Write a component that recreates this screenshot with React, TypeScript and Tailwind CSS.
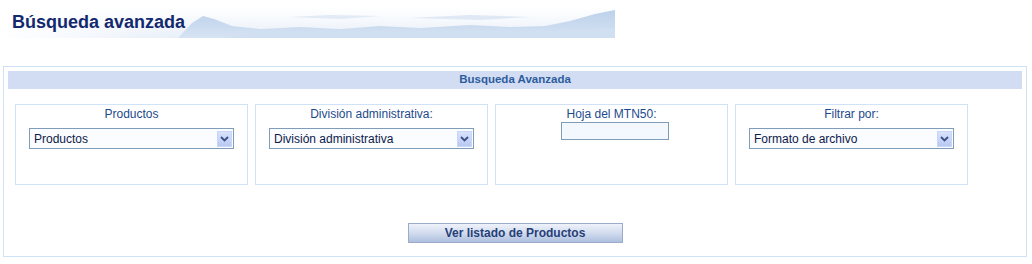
import React from "react";

const font = { fontFamily: '"Liberation Sans", Arial, sans-serif' };

function Chevron() {
  return (
    <div className="w-[15px] h-[16px] mr-[1px] flex items-center justify-center bg-gradient-to-b from-[#d9e3fb] to-[#b7c8f2] border border-[#c9d6f6]">
      <svg width="9" height="6" viewBox="0 0 9 6">
        <path d="M1 1 L4.5 4.5 L8 1" stroke="#3e4f86" strokeWidth="1.8" fill="none" />
      </svg>
    </div>
  );
}

function Select({ value }: { value: string }) {
  return (
    <div className="w-[205px] h-[21px] border border-[#7f9db9] bg-[#fbfcff] flex items-center justify-between">
      <span className="pl-[4px] text-[12px] text-[#0c1a4a] leading-none">{value}</span>
      <Chevron />
    </div>
  );
}

function Panel({ label, children }: { label: string; children: React.ReactNode }) {
  return (
    <div className="w-[233px] h-[81px] border border-[#cfe2f6] flex flex-col items-center pt-[2px]">
      <div className="text-[12px] text-[#1d4a8c] leading-[14px]">{label}</div>
      {children}
    </div>
  );
}

export default function App() {
  return (
    <div className="w-[1032px] h-[264px] bg-white" style={font}>
      <div className="relative w-[615px] h-[40px]">
        <svg className="absolute left-0 top-[7px]" width="615" height="31" viewBox="0 0 615 31">
          <defs>
            <linearGradient id="sky" x1="0" y1="0" x2="0" y2="1">
              <stop offset="0" stopColor="#ffffff" />
              <stop offset="1" stopColor="#e9f0f9" />
            </linearGradient>
            <linearGradient id="mtn" x1="0" y1="0" x2="0" y2="1">
              <stop offset="0" stopColor="#bcd1ea" />
              <stop offset="1" stopColor="#d6e3f3" />
            </linearGradient>
            <linearGradient id="fade" x1="0" y1="0" x2="1" y2="0">
              <stop offset="0" stopColor="#ffffff" stopOpacity="1" />
              <stop offset="0.28" stopColor="#ffffff" stopOpacity="0" />
            </linearGradient>
          </defs>
          <rect x="0" y="0" width="615" height="31" fill="url(#sky)" />
          <path d="M178 31 L192 16 L203 9 L214 12 L232 19 L260 22 L300 20 L340 22 L380 19 L420 21 L470 18 L510 20 L545 19 L570 14 L595 7 L615 3 L615 31 Z" fill="url(#mtn)" />
          <path d="M225 31 L260 25 L320 24 L380 26 L440 23 L500 25 L560 24 L615 21 L615 31 Z" fill="#d0dff1" />
          <path d="M290 10 L330 8 L380 9 L340 12 Z" fill="#e2eaf6" />
          <path d="M410 11 L470 8 L530 10 L480 13 Z" fill="#dfe8f5" />
          <rect x="0" y="0" width="615" height="31" fill="url(#fade)" />
        </svg>
        <div className="absolute left-[12px] top-[11px] text-[18px] font-bold text-[#13296e] leading-[22px]">
          Búsqueda avanzada
        </div>
      </div>
      <div className="mt-[26px] ml-[3px] w-[1024px] h-[191px] border border-[#cde2f7] p-[4px] flex flex-col">
        <div className="h-[18px] bg-[#d2dcf3] flex items-center justify-center text-[11.5px] font-bold text-[#2d5c9c]">
          Busqueda Avanzada
        </div>
        <div className="mt-[15px] ml-[7px] flex gap-[7px]">
          <Panel label="Productos">
            <div className="mt-[7px]">
              <Select value="Productos" />
            </div>
          </Panel>
          <Panel label="División administrativa:">
            <div className="mt-[7px]">
              <Select value="División administrativa" />
            </div>
          </Panel>
          <Panel label="Hoja del MTN50:">
            <div className="mt-[1px] ml-[6px] w-[108px] h-[18px] border border-[#7f9db9] bg-[#f3f7fe]" />
          </Panel>
          <Panel label="Filtrar por:">
            <div className="mt-[7px]">
              <Select value="Formato de archivo" />
            </div>
          </Panel>
        </div>
        <div className="mt-[38px] flex justify-center">
          <div className="w-[215px] h-[20px] border border-[#9aabcb] bg-gradient-to-b from-[#eef2fa] via-[#d2dcee] to-[#aebfde] flex items-center justify-center text-[12px] font-bold text-[#263f78]">
            Ver listado de Productos
          </div>
        </div>
      </div>
    </div>
  );
}
